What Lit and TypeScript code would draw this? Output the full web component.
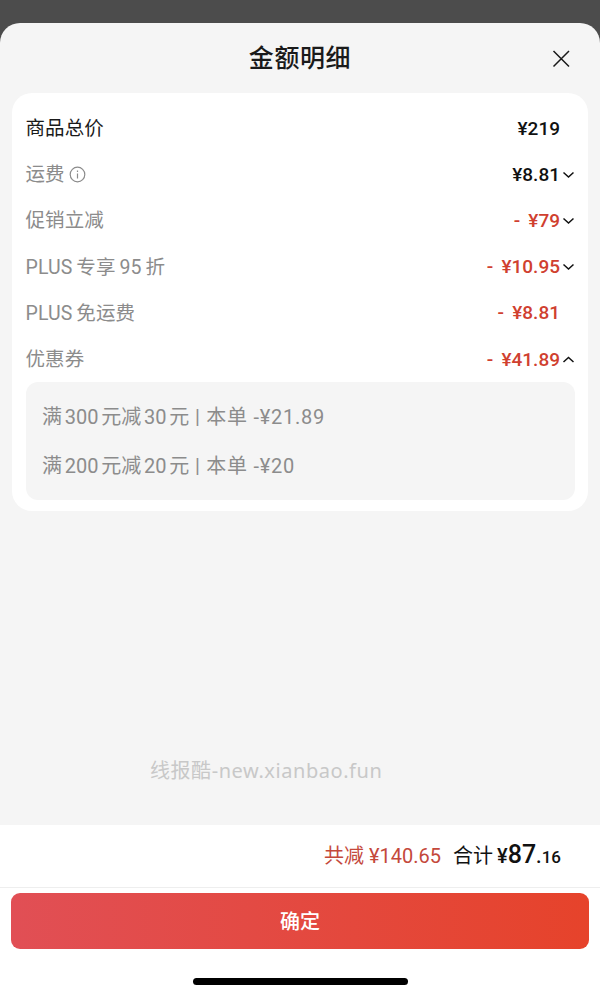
import { LitElement, css, html } from 'lit';
import { customElement } from 'lit/decorators.js';

type Row = { label: string; value: string; red?: boolean; info?: boolean; chevron?: 'up' | 'down'; strong?: boolean };

const rows: Row[] = [
    { label: '商品总价', value: '¥219', strong: true },
    { label: '运费', value: '¥8.81', info: true, chevron: 'down' },
    { label: '促销立减', value: '- ¥79', red: true, chevron: 'down' },
    { label: 'PLUS 专享 95 折', value: '- ¥10.95', red: true, chevron: 'down' },
    { label: 'PLUS 免运费', value: '- ¥8.81', red: true },
    { label: '优惠券', value: '- ¥41.89', red: true, chevron: 'up' },
];

@customElement('app-root')
export class AppRoot extends LitElement {

    static styles = css`
    :host{
        display:block;
        width:600px;
        height:996px;
        background:#4c4c4c;
        font-family:"Roboto","Noto Sans CJK SC",sans-serif;
        overflow:hidden;
    }
    .sheet{
        position:relative;
        margin-top:23px;
        height:973px;
        background:#f5f5f5;
        border-radius:20px 20px 0 0;
        display:flex;
        flex-direction:column;
        overflow:hidden;
    }
    .head{
        height:70px;
        display:flex;
        align-items:center;
        justify-content:center;
        position:relative;
        flex:none;
    }
    .title{
        font-size:25px;
        font-weight:500;
        color:#1a1a1a;
        padding-bottom:4px;
        letter-spacing:0.6px;
    }
    .close{
        position:absolute;
        right:30px;
        top:27px;
        width:18px;
        height:18px;
    }
    .card{
        flex:none;
        margin:0 12px;
        background:#fff;
        border-radius:20px;
        padding:12px 13px 11px 13.5px;
    }
    .row{
        height:46.2px;
        display:flex;
        align-items:center;
        font-size:19.5px;
        color:#8c8c8c;
    }
    .row.strong .label{ color:#1a1a1a; }
    .label{
        flex:1;
        display:flex;
        align-items:center;
        gap:4px;
        word-spacing:-1px;
        letter-spacing:0.1px;
    }
    .label span{ padding-bottom:3px; }
    .value{
        font-weight:500;
        font-size:19px;
        color:#111;
        word-spacing:3.5px;
    }
    .value.red{ color:#d0402f; }
    .chev{
        width:15px;
        height:15px;
        flex:none;
    }
    .details{
        background:#f5f5f5;
        border-radius:12px;
        height:118px;
        padding:0 16.5px;
        display:flex;
        flex-direction:column;
        justify-content:center;
        gap:25px;
        color:#8c8c8c;
        font-size:20px;
        line-height:24px;
        letter-spacing:0.75px;
    }
    .tight{ word-spacing:-2.2px; letter-spacing:0; }
    .spacer{ flex:1; }
    .watermark{
        position:absolute;
        left:150px;
        top:735px;
        font-family:"Noto Sans","Noto Sans CJK SC",sans-serif;
        font-size:20px;
        line-height:26px;
        color:#c8c8c8;
        letter-spacing:0.55px;
    }
    .foot{
        flex:none;
        background:#fff;
        height:171px;
        display:flex;
        flex-direction:column;
    }
    .sum{
        height:63px;
        box-sizing:border-box;
        padding-bottom:3px;
        flex:none;
        border-bottom:1px solid #eeeeee;
        display:flex;
        align-items:center;
        justify-content:flex-end;
        padding-right:39px;
        font-size:20px;
        color:#111;
    }
    .saved{ color:#c4483b; margin-right:12px; }
    .total{ display:flex; align-items:baseline; gap:4px; }
    .num{ font-weight:500; }
    .big{ font-size:25px; }
    .small{ font-size:17px; }
    .confirm{
        margin:5px 11px 0;
        height:56px;
        box-sizing:border-box;
        padding-bottom:2px;
        flex:none;
        border-radius:9px;
        background:linear-gradient(90deg,#e14f55,#e6432b);
        color:#fff;
        font-size:20px;
        font-weight:500;
        display:flex;
        align-items:center;
        justify-content:center;
    }
    .bar-wrap{
        flex:1;
        display:flex;
        justify-content:center;
        padding-top:29px;
    }
    .bar{
        width:215px;
        height:7px;
        border-radius:4px;
        background:#000;
    }
    `

    private renderChevron(dir?: 'up' | 'down') {
        if (!dir) return html`<span class="chev"></span>`;
        const d = dir === 'down' ? 'M3.5 5.5 L8.5 10 L13.5 5.5' : 'M3.5 10 L8.5 5.5 L13.5 10';
        return html`<svg class="chev" viewBox="0 0 15 15" fill="none" stroke="#111" stroke-width="1.5">
            <path d=${d}></path>
        </svg>`;
    }

    private renderInfo() {
        return html`<svg width="17" height="17" viewBox="0 0 17 17" fill="none" stroke="#8c8c8c" stroke-width="1.2">
            <circle cx="8.5" cy="8.5" r="7.3"></circle>
            <path d="M8.5 7.4v5"></path>
            <path d="M8.5 4.4v1.5"></path>
        </svg>`;
    }

    render() {
        return html`
        <div class="sheet">
            <div class="head">
                <div class="title">金额明细</div>
                <svg class="close" viewBox="0 0 18 18" fill="none" stroke="#1a1a1a" stroke-width="1.5">
                    <path d="M1.5 1 L17 16.5 M17 1 L1.5 16.5"></path>
                </svg>
            </div>
            <div class="card">
                ${rows.map(r => html`
                    <div class="row ${r.strong ? 'strong' : ''}">
                        <div class="label"><span>${r.label}</span>${r.info ? this.renderInfo() : ''}</div>
                        <div class="value ${r.red ? 'red' : ''}">${r.value}</div>
                        ${this.renderChevron(r.chevron)}
                    </div>
                `)}
                <div class="details">
                    <div><span class="tight">满 300 元减 30 元</span> | 本单 -¥21.89</div>
                    <div><span class="tight">满 200 元减 20 元</span> | 本单 -¥20</div>
                </div>
            </div>
            <div class="spacer"></div>
            <div class="watermark">线报酷-new.xianbao.fun</div>
            <div class="foot">
                <div class="sum">
                    <span class="saved">共减 ¥140.65</span>
                    <span class="total">合计 <span class="num">¥<span class="big">87</span>.<span class="small">16</span></span></span>
                </div>
                <div class="confirm">确定</div>
                <div class="bar-wrap"><div class="bar"></div></div>
            </div>
        </div>
        `
    }
}

declare global {
    interface HTMLElementTagNameMap {
        'app-root': AppRoot
    }
}
